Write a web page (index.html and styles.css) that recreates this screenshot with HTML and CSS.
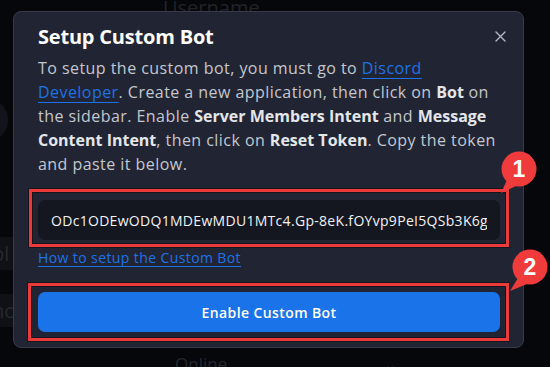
FILE: index.html
```html
<!DOCTYPE html>
<html lang="en">
<head>
<meta charset="utf-8">
<title>Setup Custom Bot</title>
<link rel="stylesheet" href="styles.css">
</head>
<body>
<div class="backdrop">
  <div class="bg-label">Username</div>
  <div class="bg-side">
    <div class="bg-avatar"></div>
    <div class="bg-item">pl</div>
    <div class="bg-item">ho</div>
  </div>
  <div class="bg-select"><span>Online</span><span class="bg-chev">&#8964;</span></div>
</div>

<div class="modal" role="dialog" aria-labelledby="modal-title">
  <div class="modal-head">
    <h2 id="modal-title" class="modal-title">Setup Custom Bot</h2>
    <button class="close" aria-label="Close">
      <svg width="11" height="11" viewBox="0 0 11 11"><path d="M1 1L10 10M10 1L1 10" stroke="#b4b8c3" stroke-width="1.4" stroke-linecap="round"/></svg>
    </button>
  </div>
  <p class="desc">To setup the custom bot, you must go to <a class="link" href="#">Discord<br>Developer</a>. Create a new application, then click on <b>Bot</b> on<br>the sidebar. Enable <b>Server Members Intent</b> and <b>Message<br>Content Intent</b>, then click on <b>Reset Token</b>. Copy the token<br>and paste it below.</p>

  <div class="callout callout-input">
    <input class="token" type="text" readonly value="ODc1ODEwODQ1MDEwMDU1MTc4.Gp-8eK.fOYvp9PeI5QSb3K6gnI">
    <svg class="badge badge-1" width="44" height="46" viewBox="0 0 44 46">
      <path d="M12 31 L6 44 L21 37 Z" fill="#ef3b3b"/>
      <circle cx="24" cy="20" r="17.5" fill="#ef3b3b"/>
      <text x="24" y="28" text-anchor="middle" class="badge-num">1</text>
    </svg>
  </div>

  <a class="help" href="#">How to setup the Custom Bot</a>

  <div class="callout callout-btn">
    <button class="enable">Enable Custom Bot</button>
    <svg class="badge badge-2" width="44" height="46" viewBox="0 0 44 46">
      <path d="M12 31 L4 44 L21 37 Z" fill="#ef3b3b"/>
      <circle cx="24" cy="20" r="17.5" fill="#ef3b3b"/>
      <text x="24" y="28" text-anchor="middle" class="badge-num">2</text>
    </svg>
  </div>
</div>
</body>
</html>
```

FILE: styles.css
```css
* { box-sizing: border-box; }

html, body {
  margin: 0;
  padding: 0;
}

body {
  width: 550px;
  height: 367px;
  overflow: hidden;
  position: relative;
  background: #06070b;
  font-family: "Open Sans", "Noto Sans", sans-serif;
  color: #c4c7cf;
}

/* faint page behind the dialog */
.backdrop {
  height: 367px;
  display: grid;
  grid-template-columns: 160px 1fr;
  grid-template-rows: 30px 1fr 16px;
}
.bg-label {
  grid-column: 2;
  grid-row: 1;
  padding-left: 3px;
  margin-top: -6px;
  font-size: 20px;
  color: #202329;
}
.bg-side {
  grid-column: 1;
  grid-row: 1 / 4;
  padding-top: 100px;
  display: flex;
  flex-direction: column;
  gap: 24px;
}
.bg-avatar {
  width: 36px;
  height: 40px;
  margin-left: -28px;
  border-radius: 50%;
  background: #12141b;
  margin-bottom: 73px;
}
.bg-item {
  width: 40px;
  height: 33px;
  background: #0f1116;
  color: #262930;
  font-size: 20px;
  line-height: 33px;
  text-indent: -8px;
}
.bg-select {
  grid-column: 2;
  grid-row: 3;
  display: flex;
  justify-content: space-between;
  padding: 3px 152px 0 15px;
  font-size: 17px;
  line-height: 20px;
  color: #24272e;
}

/* dialog */
.modal {
  position: absolute;
  left: 13px;
  top: 11px;
  width: 511px;
  height: 337px;
  background: #212533;
  border: 1px solid #363b4a;
  border-radius: 8px;
  padding: 11px 23px 0 24px;
  display: flex;
  flex-direction: column;
  align-items: stretch;
}

.modal-head {
  display: flex;
  justify-content: space-between;
  align-items: flex-start;
}
.modal-title {
  margin: 0;
  font-size: 20px;
  line-height: 28px;
  font-weight: 700;
  color: #ffffff;
  letter-spacing: -0.2px;
}
.close {
  background: none;
  border: 0;
  padding: 0;
  margin: 8px -6px 0 0;
  width: 11px;
  height: 11px;
  display: flex;
}

.desc {
  margin: 5px 0 0;
  font-size: 16px;
  line-height: 24px;
  color: #c4c7cf;
  white-space: nowrap;
  letter-spacing: 0.45px;
}
.desc b {
  font-weight: 700;
  color: #e4e6ea;
  letter-spacing: 0px;
}
.link {
  color: #1f72e6;
  text-decoration: underline;
  text-underline-offset: 4px;
  text-decoration-thickness: 1px;
}

.callout {
  position: relative;
  border: 3px solid #ea3a3c;
  box-shadow: 0 0 0 1px rgba(20, 6, 8, 0.55), inset 0 0 0 1px rgba(20, 6, 8, 0.55);
}
.callout-input {
  margin: 13px -9px 0;
  padding: 8px 6px 4px;
}
.token {
  display: block;
  width: 100%;
  height: 40px;
  border: 0;
  outline: none;
  border-radius: 7px;
  background: #151720;
  color: #f1f2f4;
  font-family: "Open Sans", "Noto Sans", sans-serif;
  font-size: 14px;
  letter-spacing: 0.3px;
  padding: 0 13px;
}

.help {
  align-self: flex-start;
  margin-top: 1px;
  font-size: 14px;
  line-height: 20px;
  letter-spacing: 0.4px;
  color: #1f72e6;
  text-decoration: underline;
  text-underline-offset: 3px;
  text-decoration-thickness: 1px;
}

.callout-btn {
  margin: 15px -9px 0 -10px;
  padding: 6px 6px 6px 7px;
}
.enable {
  display: block;
  width: 100%;
  height: 40px;
  border: 0;
  border-radius: 7px;
  background: #1a73e8;
  color: #ffffff;
  font-family: "Open Sans", "Noto Sans", sans-serif;
  font-size: 14px;
  font-weight: 600;
  letter-spacing: 0.4px;
}

.badge {
  position: absolute;
  overflow: visible;
}
.badge-1 {
  left: 463px;
  top: -43px;
}
.badge-2 {
  left: 475px;
  top: -39px;
}
.badge-num {
  font-family: "Liberation Sans", sans-serif;
  font-weight: 700;
  font-size: 23px;
  fill: #ffffff;
}
```
